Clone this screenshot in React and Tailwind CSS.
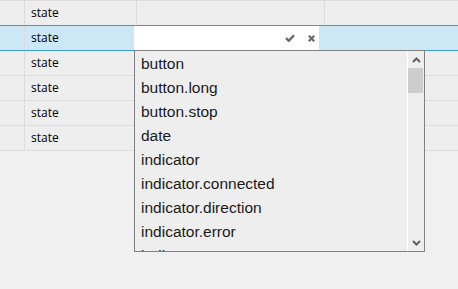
import React from "react";

const rows = ["state", "state", "state", "state", "state", "state"];
const items = [
  "button",
  "button.long",
  "button.stop",
  "date",
  "indicator",
  "indicator.connected",
  "indicator.direction",
  "indicator.error",
  "indicator.overcurrent",
];

function Row({ text, selected, first }) {
  const base = selected
    ? "bg-[#cce7f5] border-b border-[#3b9ad9]"
    : first
    ? "bg-[#eeeeee] border-b border-[#3b9ad9]"
    : "bg-[#eeeeee] border-b border-[#dcdcdc]";
  return (
    <div className={`grid grid-cols-[25px_112px_188px_1fr] h-[25px] ${base}`}>
      <div className="border-r border-[#dcdcdc]" />
      <div className="border-r border-[#dcdcdc] flex items-center pl-[6px] text-[12px] text-black">
        {text}
      </div>
      <div className={selected ? "" : "border-r border-[#dcdcdc]"} />
      <div />
    </div>
  );
}

export default function App() {
  return (
    <div
      className="relative w-[458px] h-[289px] bg-[#f0f0f0] overflow-hidden"
      style={{ fontFamily: '"Open Sans", "Liberation Sans", sans-serif' }}
    >
      <div className="border-t border-[#dcdcdc]">
        {rows.map((r, i) => (
          <Row key={i} text={r} selected={i === 1} first={i === 0} />
        ))}
      </div>

      {/* editor */}
      <div className="absolute left-[134px] top-[26px] w-[185px] h-[24px] bg-white flex items-center justify-end pr-[4px] gap-[13px]">
        <svg width="10" height="8" viewBox="0 0 10 8">
          <polyline points="1,4 3.8,6.8 9,1.2" fill="none" stroke="#6a6a6a" strokeWidth="2.4" />
        </svg>
        <svg width="7" height="7" viewBox="0 0 7 7">
          <line x1="0.8" y1="0.8" x2="6.2" y2="6.2" stroke="#6a6a6a" strokeWidth="2.2" />
          <line x1="6.2" y1="0.8" x2="0.8" y2="6.2" stroke="#6a6a6a" strokeWidth="2.2" />
        </svg>
      </div>

      {/* dropdown */}
      <div className="absolute left-[134px] top-[50px] w-[291px] h-[202px] border border-[#808080] bg-[#eeeeee] flex">
        <div className="flex-1 overflow-hidden pt-[1px]">
          {items.map((it) => (
            <div
              key={it}
              className="h-[24px] flex items-center pl-[6px] text-[15.5px] text-[#1a1a1a] whitespace-nowrap"
              style={{ fontFamily: '"Liberation Sans", Arial, sans-serif' }}
            >
              {it}
            </div>
          ))}
        </div>
        <div className="w-[17px] border-l border-white flex flex-col">
          <div className="h-[17px] flex items-center justify-center">
            <svg width="9" height="6" viewBox="0 0 9 6">
              <polyline points="1,5 4.5,1.5 8,5" fill="none" stroke="#606060" strokeWidth="2" />
            </svg>
          </div>
          <div className="h-[25px] bg-[#cdcdcd] mr-[1px]" />
          <div className="flex-1" />
          <div className="h-[17px] flex items-center justify-center">
            <svg width="9" height="6" viewBox="0 0 9 6">
              <polyline points="1,1 4.5,4.5 8,1" fill="none" stroke="#606060" strokeWidth="2" />
            </svg>
          </div>
        </div>
      </div>
    </div>
  );
}
